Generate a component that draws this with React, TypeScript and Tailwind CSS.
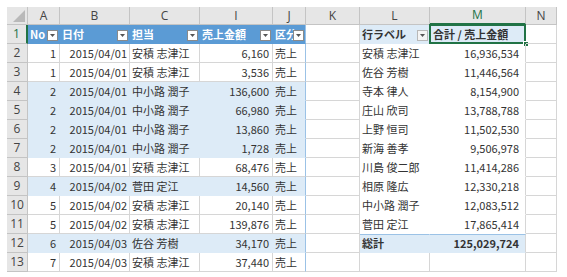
import React from 'react';

type TRow = { no: number; date: string; name: string; amt: string; hl?: boolean };

const rows: TRow[] = [
  { no: 1, date: '2015/04/01', name: '安積 志津江', amt: '6,160' },
  { no: 1, date: '2015/04/01', name: '安積 志津江', amt: '3,536' },
  { no: 2, date: '2015/04/01', name: '中小路 潤子', amt: '136,600', hl: true },
  { no: 2, date: '2015/04/01', name: '中小路 潤子', amt: '66,980', hl: true },
  { no: 2, date: '2015/04/01', name: '中小路 潤子', amt: '13,860', hl: true },
  { no: 2, date: '2015/04/01', name: '中小路 潤子', amt: '1,728', hl: true },
  { no: 3, date: '2015/04/01', name: '安積 志津江', amt: '68,476' },
  { no: 4, date: '2015/04/02', name: '菅田 定江', amt: '14,560', hl: true },
  { no: 5, date: '2015/04/02', name: '安積 志津江', amt: '20,140' },
  { no: 5, date: '2015/04/02', name: '安積 志津江', amt: '139,876' },
  { no: 6, date: '2015/04/03', name: '佐谷 芳樹', amt: '34,170', hl: true },
  { no: 7, date: '2015/04/03', name: '安積 志津江', amt: '37,440' },
];

const pivot: [string, string][] = [
  ['安積 志津江', '16,936,534'],
  ['佐谷 芳樹', '11,446,564'],
  ['寺本 律人', '8,154,900'],
  ['庄山 欣司', '13,788,788'],
  ['上野 恒司', '11,502,530'],
  ['新海 善孝', '9,506,978'],
  ['川島 俊二郎', '11,414,286'],
  ['相原 隆広', '12,330,218'],
  ['中小路 潤子', '12,083,512'],
  ['菅田 定江', '17,865,414'],
];

const cell = 'relative flex items-center overflow-hidden whitespace-nowrap text-[11px] leading-none text-[#333] border-r border-b';
const grid = 'border-[#d6d6d6]';
const hdr = 'flex items-center justify-center bg-[#e6e6e6] border-r border-b border-[#c4c4c4] text-[12px] leading-none text-[#444] font-["Open_Sans",sans-serif]';

function Filter({ light }: { light?: boolean }) {
  return (
    <span
      className={`absolute right-[1px] bottom-[2px] w-[11px] h-[11px] flex items-center justify-center border ${
        light ? 'bg-[#f4f4f4] border-[#b8b8b8]' : 'bg-white border-[#8a8a8a]'
      }`}
    >
      <svg width="5" height="3" viewBox="0 0 5 3">
        <path d="M0 0h5L2.5 3z" fill="#555" />
      </svg>
    </span>
  );
}

export default function App() {
  const letters = ['A', 'B', 'C', 'I', 'J', 'K', 'L', 'M', 'N'];

  return (
    <div className="w-[567px] h-[277px] bg-white pl-[7px] pt-[7px] font-['Noto_Sans_CJK_JP',sans-serif]">
      <div className="grid grid-cols-[21px_32px_70px_70px_73px_33px_54px_70px_96px_31px] grid-rows-[18px_repeat(13,19px)]">
        {/* column headers */}
        <div className="relative bg-[#e6e6e6] border-r border-b border-[#c4c4c4]">
          <svg className="absolute right-[2px] bottom-[2px]" width="12" height="12" viewBox="0 0 12 12">
            <path d="M12 0V12H0z" fill="#b9b9b9" />
          </svg>
        </div>
        {letters.map((l) =>
          l === 'M' ? (
            <div key={l} className={`${hdr} bg-[#d2d2d2] text-[#217346] border-b-2 border-b-[#217346]`}>
              {l}
            </div>
          ) : (
            <div key={l} className={hdr}>
              {l}
            </div>
          )
        )}

        {/* row 1 */}
        <div className={`${hdr} bg-[#d2d2d2] text-[#217346] border-r-2 border-r-[#217346]`}>1</div>
        <div className={`${cell} border-transparent bg-[#5b9bd5] text-white font-bold pl-[2px]`}>
          No<Filter />
        </div>
        <div className={`${cell} border-transparent bg-[#5b9bd5] text-white font-bold pl-[2px]`}>
          日付<Filter />
        </div>
        <div className={`${cell} border-transparent bg-[#5b9bd5] text-white font-bold pl-[2px]`}>
          担当<Filter />
        </div>
        <div className={`${cell} border-transparent bg-[#5b9bd5] text-white font-bold pl-[2px]`}>
          売上金額<Filter />
        </div>
        <div className={`${cell} border-b-transparent border-r-[#9bc2e6] bg-[#5b9bd5] text-white font-bold pl-[2px]`}>
          区分<Filter />
        </div>
        <div className={`${cell} ${grid}`} />
        <div className={`${cell} border-transparent bg-[#ddebf7] font-bold text-[#222] pl-[2px]`}>
          行ラベル<Filter light />
        </div>
        <div className={`${cell} ${grid} bg-[#ddebf7] font-bold text-[#222] pl-[3px] overflow-visible`}>
          合計 / 売上金額
          <span className="absolute -top-[1px] -left-[1px] -right-[1px] -bottom-[1px] border-2 border-[#217346]" />
          <span className="absolute -right-[4px] -bottom-[4px] w-[6px] h-[6px] bg-[#217346] border border-white" />
        </div>
        <div className={`${cell} ${grid}`} />

        {/* rows 2-13 */}
        {rows.map((r, i) => {
          const n = i + 2;
          const f = r.hl ? 'bg-[#ddebf7] border-transparent' : grid;
          const p = i < pivot.length ? pivot[i] : null;
          const total = n === 12;
          const last = n === 13;
          return (
            <React.Fragment key={n}>
              <div className={hdr}>{n}</div>
              <div className={`${cell} ${f} justify-end pr-[3px]`}>{r.no}</div>
              <div className={`${cell} ${f} justify-end pr-[2px]`}>{r.date}</div>
              <div className={`${cell} ${f} pl-[2px]`}>{r.name}</div>
              <div className={`${cell} ${f} justify-end pr-[3px]`}>{r.amt}</div>
              <div
                className={`${cell} ${r.hl ? 'bg-[#ddebf7] border-b-transparent' : 'border-b-[#d6d6d6]'} border-r-[#9bc2e6] pl-[2px]`}
              >
                売上
              </div>
              <div className={`${cell} ${grid}`} />
              {last ? (
                <>
                  <div className={`${cell} ${grid}`} />
                  <div className={`${cell} ${grid}`} />
                </>
              ) : total ? (
                <>
                  <div className={`${cell} border-transparent border-t border-t-[#9bc2e6] bg-[#ddebf7] font-bold text-[#222] pl-[2px]`}>
                    総計
                  </div>
                  <div className={`${cell} border-b-transparent border-r-[#d6d6d6] border-t border-t-[#9bc2e6] bg-[#ddebf7] font-bold text-[#222] justify-end pr-[6px]`}>
                    125,029,724
                  </div>
                </>
              ) : (
                <>
                  <div className={`${cell} border-transparent pl-[2px]`}>{p?.[0]}</div>
                  <div className={`${cell} border-b-transparent border-r-[#d6d6d6] justify-end pr-[6px]`}>{p?.[1]}</div>
                </>
              )}
              <div className={`${cell} ${grid}`} />
            </React.Fragment>
          );
        })}
      </div>
    </div>
  );
}
